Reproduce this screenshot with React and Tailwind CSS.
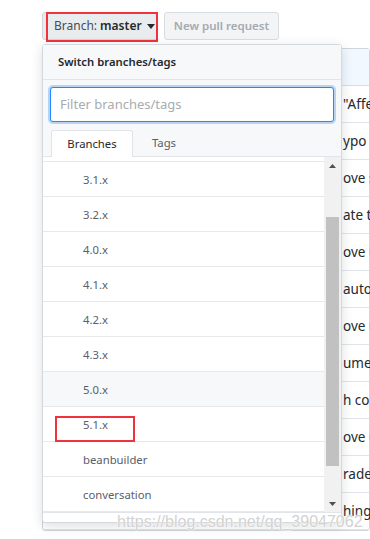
import React from 'react';

const branches = ['3.0.x', '3.1.x', '3.2.x', '4.0.x', '4.1.x', '4.2.x', '4.3.x', '5.0.x', '5.1.x', 'beanbuilder', 'conversation'];

const commits = ['"Affects', 'ypo in docs', 'ove some', 'ate to', 'ove unused', 'autolink', 'ove unused', 'umeric', 'h config', 'ove unused', 'rade deps', 'hing'];

const Caret = () => (
    <svg width="8" height="5" viewBox="0 0 8 5" className="ml-[5px]">
        <path d="M0 0h8L4 5z" fill="#24292e" />
    </svg>
);

const App = () => {
    return (
        <div className="relative w-[370px] h-[539px] bg-white overflow-hidden" style={{ fontFamily: '"Noto Sans", "Open Sans", sans-serif' }}>
            {/* top buttons */}
            <div className="flex items-center gap-[7px] pl-[42px] pt-[12px]">
                <div className="relative flex items-center h-[28px] w-[115px] pl-[11px] rounded-l-[3px] border border-[#d1d5da] bg-[#e9ecef] text-[12px]">
                    <span className="text-[#444d56]">Branch:</span>
                    <span className="ml-[3px] font-semibold text-[#24292e]">master</span>
                    <Caret />
                    <span className="absolute left-[3px] -top-[1px] -right-[2px] -bottom-[3px] border-2 border-[#f0323c]"></span>
                </div>
                <div className="flex items-center justify-center h-[28px] w-[115px] rounded-[3px] border border-[#d9dde1] bg-[#f2f4f6] text-[11.5px] font-semibold text-[#a3aab1]">
                    New pull request
                </div>
            </div>

            {/* background commit list */}
            <div className="mt-[8px] ml-[42px] border border-[#d1d5da] rounded-[3px]">
                <div className="h-[37px] bg-[#f1f8ff] border-b border-[#c8e1ff]"></div>
                {commits.map((c, i) => (
                    <div key={i} className="h-[37px] flex items-center pl-[300px] pt-[1px] border-b border-[#e1e4e8] text-[13.5px] text-[#24292e] whitespace-nowrap">
                        {c}
                    </div>
                ))}
            </div>

            {/* dropdown */}
            <div className="absolute left-[42px] top-[44px] w-[300px] bg-white border border-[#d5d8dc] rounded-[3px] shadow-[0_3px_12px_rgba(27,31,35,0.15)]">
                <div className="h-[35px] flex items-center px-[15px] bg-[#f6f8fa] border-b border-[#e1e4e8] text-[11.3px] font-semibold text-[#24292e]">
                    Switch branches/tags
                </div>
                <div className="bg-[#f6f8fa]">
                    <div className="px-[7px] pt-[7px] pb-[8px]">
                        <div className="h-[35px] flex items-center px-[9px] bg-white border border-[#2188ff] rounded-[3px] shadow-[0_0_0_2px_rgba(3,102,214,0.25)] text-[13px] text-[#a8acb0]">
                            Filter branches/tags
                        </div>
                    </div>
                    <div className="flex h-[27px] pl-[8px] border-b border-[#e1e4e8] text-[11.3px]">
                        <div className="w-[82px] flex items-center justify-center bg-white border border-b-0 border-[#e1e4e8] rounded-t-[3px] -mb-px text-[#24292e]">
                            Branches
                        </div>
                        <div className="w-[62px] flex items-center justify-center text-[#586069]">Tags</div>
                    </div>
                </div>
                <div className="flex h-[355px]">
                    <div className="flex-1 overflow-hidden">
                        <div className="-mt-[30px]">
                            {branches.map((b) => (
                                <div key={b} className={`relative h-[35px] flex items-center pl-[40px] pt-[2px] border-b border-[#e6e8eb] text-[11.3px] text-[#586069] ${b === '5.0.x' ? 'bg-[#f6f8fa]' : ''}`}>
                                    {b}
                                    {b === '5.1.x' && (
                                        <span className="absolute left-[12px] top-[9px] w-[80px] h-[26px] border-2 border-[#f0323c]"></span>
                                    )}
                                </div>
                            ))}
                        </div>
                    </div>
                    <div className="w-[17px] flex flex-col bg-[#f1f1f1]">
                        <div className="h-[17px] flex items-center justify-center">
                            <svg width="7" height="4" viewBox="0 0 7 4"><path d="M0 4L3.5 0 7 4z" fill="#505050" /></svg>
                        </div>
                        <div className="h-[43px]"></div>
                        <div className="mx-[2px] h-[249px] bg-[#c1c1c1]"></div>
                        <div className="flex-1"></div>
                        <div className="h-[17px] flex items-center justify-center">
                            <svg width="7" height="4" viewBox="0 0 7 4"><path d="M0 0h7L3.5 4z" fill="#505050" /></svg>
                        </div>
                    </div>
                </div>
                <div className="h-[10px] border-t border-[#e1e4e8]"></div>
            </div>

            {/* watermark */}
            <div className="absolute left-[117px] top-[510px] text-[16px] text-[#d2d2d2] whitespace-nowrap [text-shadow:0_0_2px_#fff,0_0_1px_#fff]" style={{ fontFamily: '"Liberation Sans", Arial, sans-serif' }}>
                https://blog.csdn.net/qq_39047062
            </div>
        </div>
    );
};

export default App;
